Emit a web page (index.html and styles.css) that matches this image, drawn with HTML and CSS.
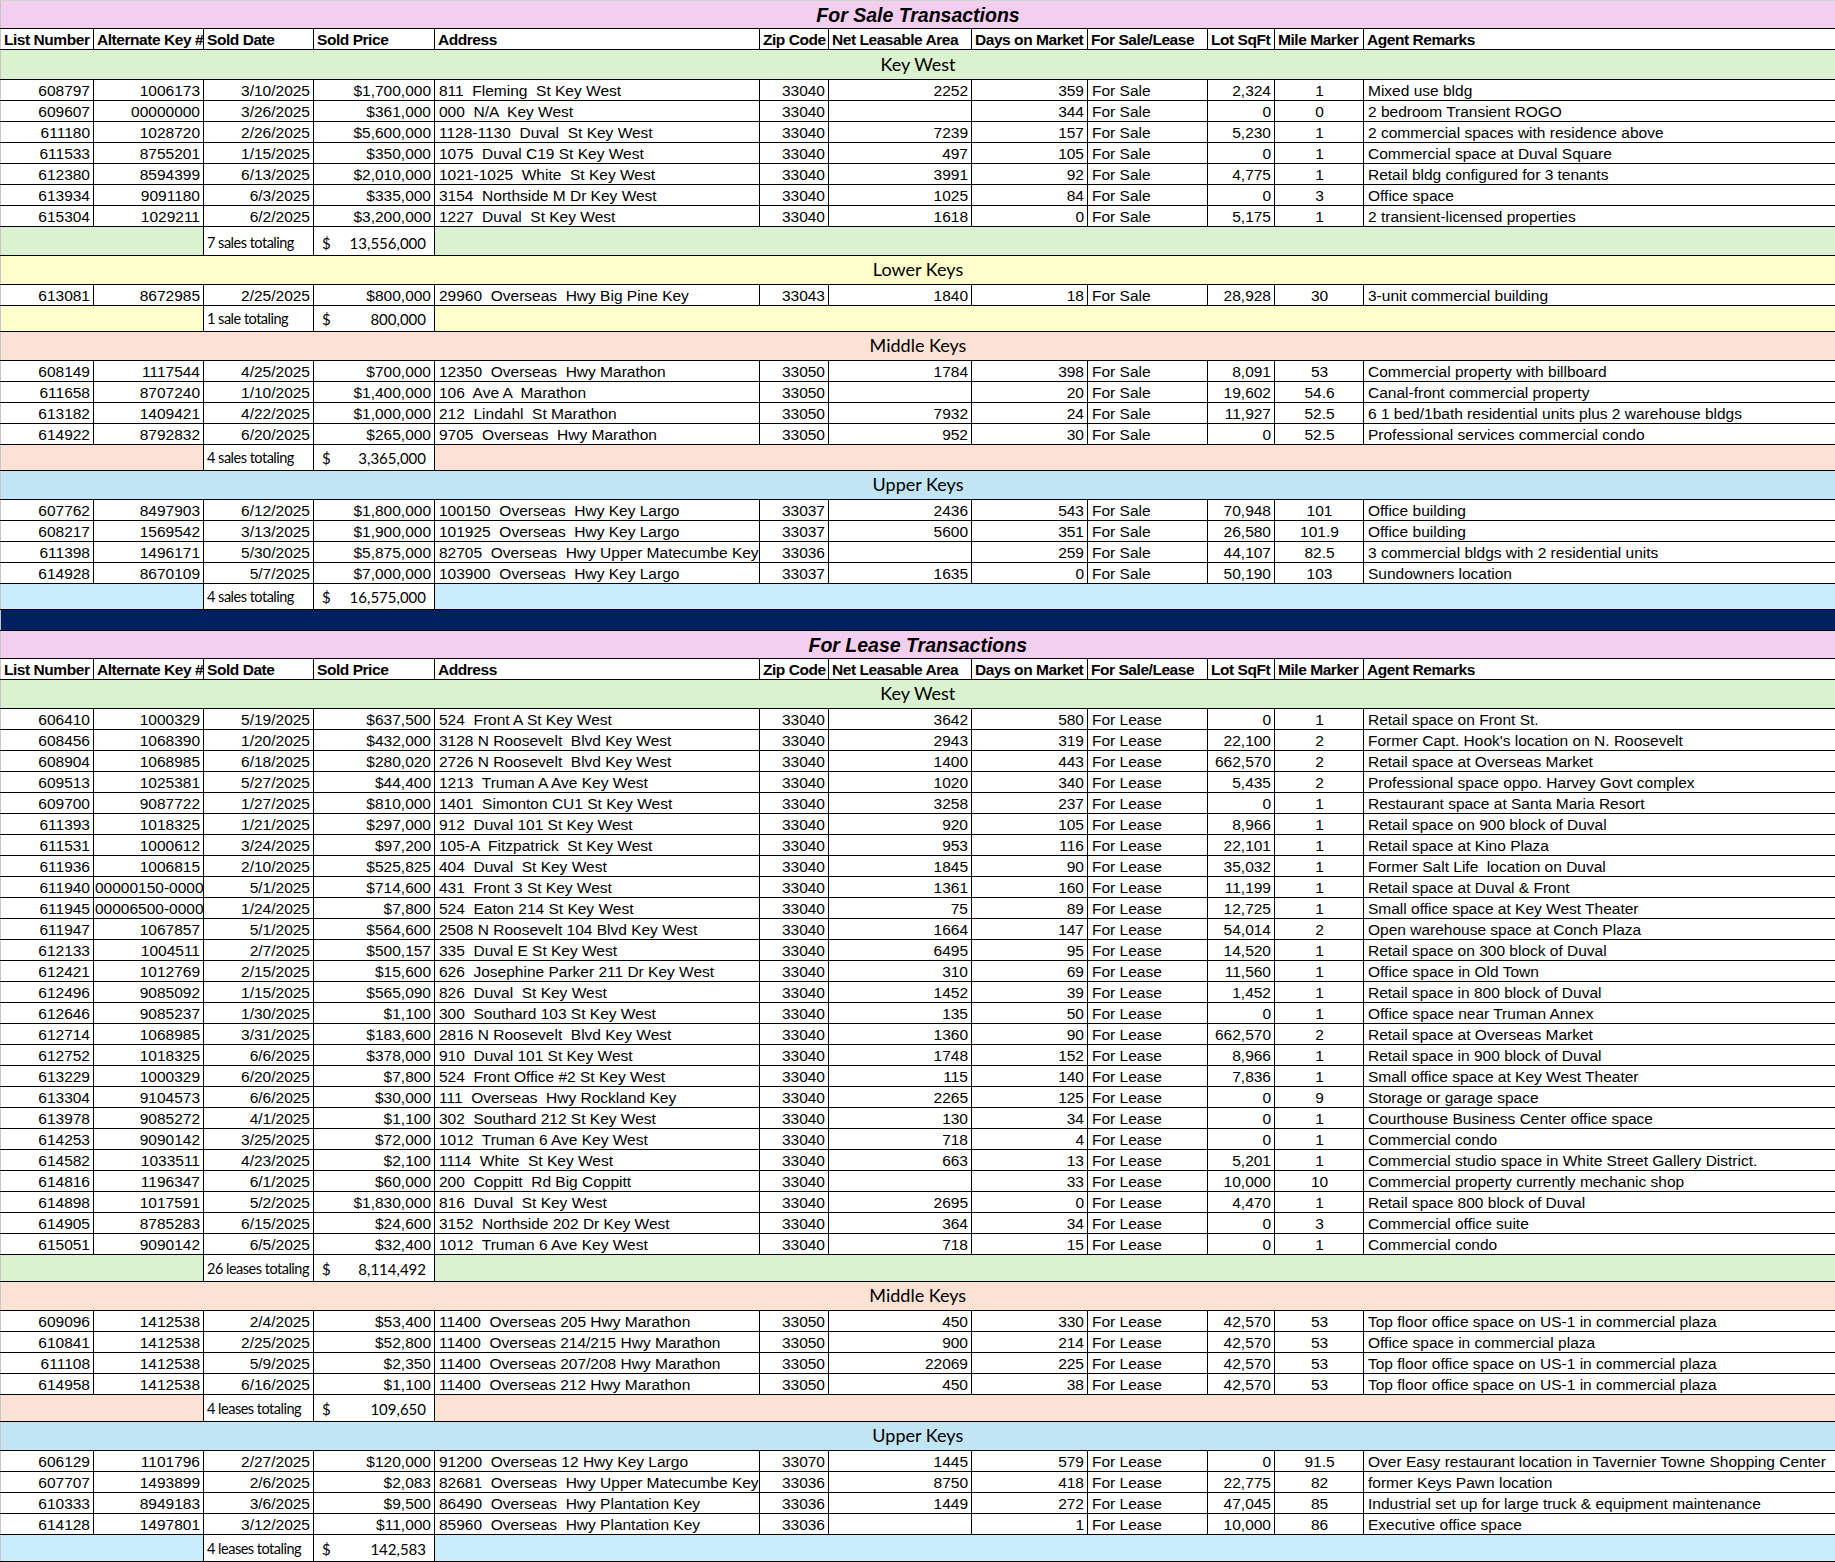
FILE: index.html
```html
<!DOCTYPE html>
<html lang="en">
<head>
<meta charset="utf-8">
<title>Transactions</title>
<link rel="stylesheet" href="styles.css">
</head>
<body>
<table class="sheet">
<colgroup>
<col class="w93"><col class="w110"><col class="w110"><col class="w121"><col class="w325"><col class="w69"><col class="w143"><col class="w116"><col class="w120"><col class="w67"><col class="w89"><col class="w472">
</colgroup>
<tbody class="sale">
<tr class="title first"><td colspan="12">For Sale Transactions</td></tr>
<tr class="head"><th>List Number</th><th>Alternate Key #</th><th>Sold Date</th><th>Sold Price</th><th>Address</th><th>Zip Code</th><th>Net Leasable Area</th><th>Days on Market</th><th>For Sale/Lease</th><th>Lot SqFt</th><th>Mile Marker</th><th>Agent Remarks</th></tr>
<tr class="band kw big"><td colspan="12">Key West</td></tr>
<tr class="row"><td class="r">608797</td><td class="r">1006173</td><td class="r">3/10/2025</td><td class="r">$1,700,000</td><td>811  Fleming  St Key West</td><td class="r">33040</td><td class="r">2252</td><td class="r">359</td><td>For Sale</td><td class="r">2,324</td><td class="c">1</td><td>Mixed use bldg</td></tr>
<tr class="row"><td class="r">609607</td><td class="r">00000000</td><td class="r">3/26/2025</td><td class="r">$361,000</td><td>000  N/A  Key West</td><td class="r">33040</td><td class="r"></td><td class="r">344</td><td>For Sale</td><td class="r">0</td><td class="c">0</td><td>2 bedroom Transient ROGO</td></tr>
<tr class="row"><td class="r">611180</td><td class="r">1028720</td><td class="r">2/26/2025</td><td class="r">$5,600,000</td><td>1128-1130  Duval  St Key West</td><td class="r">33040</td><td class="r">7239</td><td class="r">157</td><td>For Sale</td><td class="r">5,230</td><td class="c">1</td><td>2 commercial spaces with residence above</td></tr>
<tr class="row"><td class="r">611533</td><td class="r">8755201</td><td class="r">1/15/2025</td><td class="r">$350,000</td><td>1075  Duval C19 St Key West</td><td class="r">33040</td><td class="r">497</td><td class="r">105</td><td>For Sale</td><td class="r">0</td><td class="c">1</td><td>Commercial space at Duval Square</td></tr>
<tr class="row"><td class="r">612380</td><td class="r">8594399</td><td class="r">6/13/2025</td><td class="r">$2,010,000</td><td>1021-1025  White  St Key West</td><td class="r">33040</td><td class="r">3991</td><td class="r">92</td><td>For Sale</td><td class="r">4,775</td><td class="c">1</td><td>Retail bldg configured for 3 tenants</td></tr>
<tr class="row"><td class="r">613934</td><td class="r">9091180</td><td class="r">6/3/2025</td><td class="r">$335,000</td><td>3154  Northside M Dr Key West</td><td class="r">33040</td><td class="r">1025</td><td class="r">84</td><td>For Sale</td><td class="r">0</td><td class="c">3</td><td>Office space</td></tr>
<tr class="row"><td class="r">615304</td><td class="r">1029211</td><td class="r">6/2/2025</td><td class="r">$3,200,000</td><td>1227  Duval  St Key West</td><td class="r">33040</td><td class="r">1618</td><td class="r">0</td><td>For Sale</td><td class="r">5,175</td><td class="c">1</td><td>2 transient-licensed properties</td></tr>
<tr class="tot kw big"><td colspan="2" class="fill"></td><td class="lbl">7 sales totaling</td><td class="amt"><div class="money"><span>$</span><span>13,556,000</span></div></td><td colspan="8" class="fill"></td></tr>

<tr class="band lk"><td colspan="12">Lower Keys</td></tr>
<tr class="row"><td class="r">613081</td><td class="r">8672985</td><td class="r">2/25/2025</td><td class="r">$800,000</td><td>29960  Overseas  Hwy Big Pine Key</td><td class="r">33043</td><td class="r">1840</td><td class="r">18</td><td>For Sale</td><td class="r">28,928</td><td class="c">30</td><td>3-unit commercial building</td></tr>
<tr class="tot lk"><td colspan="2" class="fill"></td><td class="lbl">1 sale totaling</td><td class="amt"><div class="money"><span>$</span><span>800,000</span></div></td><td colspan="8" class="fill"></td></tr>

<tr class="band mk"><td colspan="12">Middle Keys</td></tr>
<tr class="row"><td class="r">608149</td><td class="r">1117544</td><td class="r">4/25/2025</td><td class="r">$700,000</td><td>12350  Overseas  Hwy Marathon</td><td class="r">33050</td><td class="r">1784</td><td class="r">398</td><td>For Sale</td><td class="r">8,091</td><td class="c">53</td><td>Commercial property with billboard</td></tr>
<tr class="row"><td class="r">611658</td><td class="r">8707240</td><td class="r">1/10/2025</td><td class="r">$1,400,000</td><td>106  Ave A  Marathon</td><td class="r">33050</td><td class="r"></td><td class="r">20</td><td>For Sale</td><td class="r">19,602</td><td class="c">54.6</td><td>Canal-front commercial property</td></tr>
<tr class="row"><td class="r">613182</td><td class="r">1409421</td><td class="r">4/22/2025</td><td class="r">$1,000,000</td><td>212  Lindahl  St Marathon</td><td class="r">33050</td><td class="r">7932</td><td class="r">24</td><td>For Sale</td><td class="r">11,927</td><td class="c">52.5</td><td>6 1 bed/1bath residential units plus 2 warehouse bldgs</td></tr>
<tr class="row"><td class="r">614922</td><td class="r">8792832</td><td class="r">6/20/2025</td><td class="r">$265,000</td><td>9705  Overseas  Hwy Marathon</td><td class="r">33050</td><td class="r">952</td><td class="r">30</td><td>For Sale</td><td class="r">0</td><td class="c">52.5</td><td>Professional services commercial condo</td></tr>
<tr class="tot mk"><td colspan="2" class="fill"></td><td class="lbl">4 sales totaling</td><td class="amt"><div class="money"><span>$</span><span>3,365,000</span></div></td><td colspan="8" class="fill"></td></tr>

<tr class="band uk"><td colspan="12">Upper Keys</td></tr>
<tr class="row"><td class="r">607762</td><td class="r">8497903</td><td class="r">6/12/2025</td><td class="r">$1,800,000</td><td>100150  Overseas  Hwy Key Largo</td><td class="r">33037</td><td class="r">2436</td><td class="r">543</td><td>For Sale</td><td class="r">70,948</td><td class="c">101</td><td>Office building</td></tr>
<tr class="row"><td class="r">608217</td><td class="r">1569542</td><td class="r">3/13/2025</td><td class="r">$1,900,000</td><td>101925  Overseas  Hwy Key Largo</td><td class="r">33037</td><td class="r">5600</td><td class="r">351</td><td>For Sale</td><td class="r">26,580</td><td class="c">101.9</td><td>Office building</td></tr>
<tr class="row"><td class="r">611398</td><td class="r">1496171</td><td class="r">5/30/2025</td><td class="r">$5,875,000</td><td>82705  Overseas  Hwy Upper Matecumbe Key</td><td class="r">33036</td><td class="r"></td><td class="r">259</td><td>For Sale</td><td class="r">44,107</td><td class="c">82.5</td><td>3 commercial bldgs with 2 residential units</td></tr>
<tr class="row"><td class="r">614928</td><td class="r">8670109</td><td class="r">5/7/2025</td><td class="r">$7,000,000</td><td>103900  Overseas  Hwy Key Largo</td><td class="r">33037</td><td class="r">1635</td><td class="r">0</td><td>For Sale</td><td class="r">50,190</td><td class="c">103</td><td>Sundowners location</td></tr>
<tr class="tot uk"><td colspan="2" class="fill"></td><td class="lbl">4 sales totaling</td><td class="amt"><div class="money"><span>$</span><span>16,575,000</span></div></td><td colspan="8" class="fill"></td></tr>

<tr class="navy"><td colspan="12"></td></tr>
</tbody>
<tbody class="lease">
<tr class="title"><td colspan="12">For Lease Transactions</td></tr>
<tr class="head"><th>List Number</th><th>Alternate Key #</th><th>Sold Date</th><th>Sold Price</th><th>Address</th><th>Zip Code</th><th>Net Leasable Area</th><th>Days on Market</th><th>For Sale/Lease</th><th>Lot SqFt</th><th>Mile Marker</th><th>Agent Remarks</th></tr>
<tr class="band kw"><td colspan="12">Key West</td></tr>
<tr class="row"><td class="r">606410</td><td class="r">1000329</td><td class="r">5/19/2025</td><td class="r">$637,500</td><td>524  Front A St Key West</td><td class="r">33040</td><td class="r">3642</td><td class="r">580</td><td>For Lease</td><td class="r">0</td><td class="c">1</td><td>Retail space on Front St.</td></tr>
<tr class="row"><td class="r">608456</td><td class="r">1068390</td><td class="r">1/20/2025</td><td class="r">$432,000</td><td>3128 N Roosevelt  Blvd Key West</td><td class="r">33040</td><td class="r">2943</td><td class="r">319</td><td>For Lease</td><td class="r">22,100</td><td class="c">2</td><td>Former Capt. Hook's location on N. Roosevelt</td></tr>
<tr class="row"><td class="r">608904</td><td class="r">1068985</td><td class="r">6/18/2025</td><td class="r">$280,020</td><td>2726 N Roosevelt  Blvd Key West</td><td class="r">33040</td><td class="r">1400</td><td class="r">443</td><td>For Lease</td><td class="r">662,570</td><td class="c">2</td><td>Retail space at Overseas Market</td></tr>
<tr class="row"><td class="r">609513</td><td class="r">1025381</td><td class="r">5/27/2025</td><td class="r">$44,400</td><td>1213  Truman A Ave Key West</td><td class="r">33040</td><td class="r">1020</td><td class="r">340</td><td>For Lease</td><td class="r">5,435</td><td class="c">2</td><td>Professional space oppo. Harvey Govt complex</td></tr>
<tr class="row"><td class="r">609700</td><td class="r">9087722</td><td class="r">1/27/2025</td><td class="r">$810,000</td><td>1401  Simonton CU1 St Key West</td><td class="r">33040</td><td class="r">3258</td><td class="r">237</td><td>For Lease</td><td class="r">0</td><td class="c">1</td><td>Restaurant space at Santa Maria Resort</td></tr>
<tr class="row"><td class="r">611393</td><td class="r">1018325</td><td class="r">1/21/2025</td><td class="r">$297,000</td><td>912  Duval 101 St Key West</td><td class="r">33040</td><td class="r">920</td><td class="r">105</td><td>For Lease</td><td class="r">8,966</td><td class="c">1</td><td>Retail space on 900 block of Duval</td></tr>
<tr class="row"><td class="r">611531</td><td class="r">1000612</td><td class="r">3/24/2025</td><td class="r">$97,200</td><td>105-A  Fitzpatrick  St Key West</td><td class="r">33040</td><td class="r">953</td><td class="r">116</td><td>For Lease</td><td class="r">22,101</td><td class="c">1</td><td>Retail space at Kino Plaza</td></tr>
<tr class="row"><td class="r">611936</td><td class="r">1006815</td><td class="r">2/10/2025</td><td class="r">$525,825</td><td>404  Duval  St Key West</td><td class="r">33040</td><td class="r">1845</td><td class="r">90</td><td>For Lease</td><td class="r">35,032</td><td class="c">1</td><td>Former Salt Life  location on Duval</td></tr>
<tr class="row"><td class="r">611940</td><td class="clip">00000150-000000</td><td class="r">5/1/2025</td><td class="r">$714,600</td><td>431  Front 3 St Key West</td><td class="r">33040</td><td class="r">1361</td><td class="r">160</td><td>For Lease</td><td class="r">11,199</td><td class="c">1</td><td>Retail space at Duval &amp; Front</td></tr>
<tr class="row"><td class="r">611945</td><td class="clip">00006500-000000</td><td class="r">1/24/2025</td><td class="r">$7,800</td><td>524  Eaton 214 St Key West</td><td class="r">33040</td><td class="r">75</td><td class="r">89</td><td>For Lease</td><td class="r">12,725</td><td class="c">1</td><td>Small office space at Key West Theater</td></tr>
<tr class="row"><td class="r">611947</td><td class="r">1067857</td><td class="r">5/1/2025</td><td class="r">$564,600</td><td>2508 N Roosevelt 104 Blvd Key West</td><td class="r">33040</td><td class="r">1664</td><td class="r">147</td><td>For Lease</td><td class="r">54,014</td><td class="c">2</td><td>Open warehouse space at Conch Plaza</td></tr>
<tr class="row"><td class="r">612133</td><td class="r">1004511</td><td class="r">2/7/2025</td><td class="r">$500,157</td><td>335  Duval E St Key West</td><td class="r">33040</td><td class="r">6495</td><td class="r">95</td><td>For Lease</td><td class="r">14,520</td><td class="c">1</td><td>Retail space on 300 block of Duval</td></tr>
<tr class="row"><td class="r">612421</td><td class="r">1012769</td><td class="r">2/15/2025</td><td class="r">$15,600</td><td>626  Josephine Parker 211 Dr Key West</td><td class="r">33040</td><td class="r">310</td><td class="r">69</td><td>For Lease</td><td class="r">11,560</td><td class="c">1</td><td>Office space in Old Town</td></tr>
<tr class="row"><td class="r">612496</td><td class="r">9085092</td><td class="r">1/15/2025</td><td class="r">$565,090</td><td>826  Duval  St Key West</td><td class="r">33040</td><td class="r">1452</td><td class="r">39</td><td>For Lease</td><td class="r">1,452</td><td class="c">1</td><td>Retail space in 800 block of Duval</td></tr>
<tr class="row"><td class="r">612646</td><td class="r">9085237</td><td class="r">1/30/2025</td><td class="r">$1,100</td><td>300  Southard 103 St Key West</td><td class="r">33040</td><td class="r">135</td><td class="r">50</td><td>For Lease</td><td class="r">0</td><td class="c">1</td><td>Office space near Truman Annex</td></tr>
<tr class="row"><td class="r">612714</td><td class="r">1068985</td><td class="r">3/31/2025</td><td class="r">$183,600</td><td>2816 N Roosevelt  Blvd Key West</td><td class="r">33040</td><td class="r">1360</td><td class="r">90</td><td>For Lease</td><td class="r">662,570</td><td class="c">2</td><td>Retail space at Overseas Market</td></tr>
<tr class="row"><td class="r">612752</td><td class="r">1018325</td><td class="r">6/6/2025</td><td class="r">$378,000</td><td>910  Duval 101 St Key West</td><td class="r">33040</td><td class="r">1748</td><td class="r">152</td><td>For Lease</td><td class="r">8,966</td><td class="c">1</td><td>Retail space in 900 block of Duval</td></tr>
<tr class="row"><td class="r">613229</td><td class="r">1000329</td><td class="r">6/20/2025</td><td class="r">$7,800</td><td>524  Front Office #2 St Key West</td><td class="r">33040</td><td class="r">115</td><td class="r">140</td><td>For Lease</td><td class="r">7,836</td><td class="c">1</td><td>Small office space at Key West Theater</td></tr>
<tr class="row"><td class="r">613304</td><td class="r">9104573</td><td class="r">6/6/2025</td><td class="r">$30,000</td><td>111  Overseas  Hwy Rockland Key</td><td class="r">33040</td><td class="r">2265</td><td class="r">125</td><td>For Lease</td><td class="r">0</td><td class="c">9</td><td>Storage or garage space</td></tr>
<tr class="row"><td class="r">613978</td><td class="r">9085272</td><td class="r">4/1/2025</td><td class="r">$1,100</td><td>302  Southard 212 St Key West</td><td class="r">33040</td><td class="r">130</td><td class="r">34</td><td>For Lease</td><td class="r">0</td><td class="c">1</td><td>Courthouse Business Center office space</td></tr>
<tr class="row"><td class="r">614253</td><td class="r">9090142</td><td class="r">3/25/2025</td><td class="r">$72,000</td><td>1012  Truman 6 Ave Key West</td><td class="r">33040</td><td class="r">718</td><td class="r">4</td><td>For Lease</td><td class="r">0</td><td class="c">1</td><td>Commercial condo</td></tr>
<tr class="row"><td class="r">614582</td><td class="r">1033511</td><td class="r">4/23/2025</td><td class="r">$2,100</td><td>1114  White  St Key West</td><td class="r">33040</td><td class="r">663</td><td class="r">13</td><td>For Lease</td><td class="r">5,201</td><td class="c">1</td><td>Commercial studio space in White Street Gallery District.</td></tr>
<tr class="row"><td class="r">614816</td><td class="r">1196347</td><td class="r">6/1/2025</td><td class="r">$60,000</td><td>200  Coppitt  Rd Big Coppitt</td><td class="r">33040</td><td class="r"></td><td class="r">33</td><td>For Lease</td><td class="r">10,000</td><td class="c">10</td><td>Commercial property currently mechanic shop</td></tr>
<tr class="row"><td class="r">614898</td><td class="r">1017591</td><td class="r">5/2/2025</td><td class="r">$1,830,000</td><td>816  Duval  St Key West</td><td class="r">33040</td><td class="r">2695</td><td class="r">0</td><td>For Lease</td><td class="r">4,470</td><td class="c">1</td><td>Retail space 800 block of Duval</td></tr>
<tr class="row"><td class="r">614905</td><td class="r">8785283</td><td class="r">6/15/2025</td><td class="r">$24,600</td><td>3152  Northside 202 Dr Key West</td><td class="r">33040</td><td class="r">364</td><td class="r">34</td><td>For Lease</td><td class="r">0</td><td class="c">3</td><td>Commercial office suite</td></tr>
<tr class="row"><td class="r">615051</td><td class="r">9090142</td><td class="r">6/5/2025</td><td class="r">$32,400</td><td>1012  Truman 6 Ave Key West</td><td class="r">33040</td><td class="r">718</td><td class="r">15</td><td>For Lease</td><td class="r">0</td><td class="c">1</td><td>Commercial condo</td></tr>
<tr class="tot kw"><td colspan="2" class="fill"></td><td class="lbl">26 leases totaling</td><td class="amt"><div class="money"><span>$</span><span>8,114,492</span></div></td><td colspan="8" class="fill"></td></tr>

<tr class="band mk"><td colspan="12">Middle Keys</td></tr>
<tr class="row"><td class="r">609096</td><td class="r">1412538</td><td class="r">2/4/2025</td><td class="r">$53,400</td><td>11400  Overseas 205 Hwy Marathon</td><td class="r">33050</td><td class="r">450</td><td class="r">330</td><td>For Lease</td><td class="r">42,570</td><td class="c">53</td><td>Top floor office space on US-1 in commercial plaza</td></tr>
<tr class="row"><td class="r">610841</td><td class="r">1412538</td><td class="r">2/25/2025</td><td class="r">$52,800</td><td>11400  Overseas 214/215 Hwy Marathon</td><td class="r">33050</td><td class="r">900</td><td class="r">214</td><td>For Lease</td><td class="r">42,570</td><td class="c">53</td><td>Office space in commercial plaza</td></tr>
<tr class="row"><td class="r">611108</td><td class="r">1412538</td><td class="r">5/9/2025</td><td class="r">$2,350</td><td>11400  Overseas 207/208 Hwy Marathon</td><td class="r">33050</td><td class="r">22069</td><td class="r">225</td><td>For Lease</td><td class="r">42,570</td><td class="c">53</td><td>Top floor office space on US-1 in commercial plaza</td></tr>
<tr class="row"><td class="r">614958</td><td class="r">1412538</td><td class="r">6/16/2025</td><td class="r">$1,100</td><td>11400  Overseas 212 Hwy Marathon</td><td class="r">33050</td><td class="r">450</td><td class="r">38</td><td>For Lease</td><td class="r">42,570</td><td class="c">53</td><td>Top floor office space on US-1 in commercial plaza</td></tr>
<tr class="tot mk"><td colspan="2" class="fill"></td><td class="lbl">4 leases totaling</td><td class="amt"><div class="money"><span>$</span><span>109,650</span></div></td><td colspan="8" class="fill"></td></tr>

<tr class="band uk"><td colspan="12">Upper Keys</td></tr>
<tr class="row"><td class="r">606129</td><td class="r">1101796</td><td class="r">2/27/2025</td><td class="r">$120,000</td><td>91200  Overseas 12 Hwy Key Largo</td><td class="r">33070</td><td class="r">1445</td><td class="r">579</td><td>For Lease</td><td class="r">0</td><td class="c">91.5</td><td>Over Easy restaurant location in Tavernier Towne Shopping Center</td></tr>
<tr class="row"><td class="r">607707</td><td class="r">1493899</td><td class="r">2/6/2025</td><td class="r">$2,083</td><td>82681  Overseas  Hwy Upper Matecumbe Key</td><td class="r">33036</td><td class="r">8750</td><td class="r">418</td><td>For Lease</td><td class="r">22,775</td><td class="c">82</td><td>former Keys Pawn location</td></tr>
<tr class="row"><td class="r">610333</td><td class="r">8949183</td><td class="r">3/6/2025</td><td class="r">$9,500</td><td>86490  Overseas  Hwy Plantation Key</td><td class="r">33036</td><td class="r">1449</td><td class="r">272</td><td>For Lease</td><td class="r">47,045</td><td class="c">85</td><td>Industrial set up for large truck &amp; equipment maintenance</td></tr>
<tr class="row"><td class="r">614128</td><td class="r">1497801</td><td class="r">3/12/2025</td><td class="r">$11,000</td><td>85960  Overseas  Hwy Plantation Key</td><td class="r">33036</td><td class="r"></td><td class="r">1</td><td>For Lease</td><td class="r">10,000</td><td class="c">86</td><td>Executive office space</td></tr>
<tr class="tot uk last"><td colspan="2" class="fill"></td><td class="lbl">4 leases totaling</td><td class="amt"><div class="money"><span>$</span><span>142,583</span></div></td><td colspan="8" class="fill"></td></tr>
</tbody>
</table>
</body>
</html>
```

FILE: styles.css
```css
* { box-sizing: border-box; }
html, body { margin: 0; padding: 0; background: #ffffff; }
body {
  font-family: "Liberation Sans", Arial, sans-serif;
  color: #000;
}
.sheet {
  border-collapse: collapse;
  table-layout: fixed;
  width: 1835px;
}
.w93 { width: 93px; }
.w110 { width: 110px; }
.w121 { width: 121px; }
.w325 { width: 325px; }
.w69 { width: 69px; }
.w143 { width: 143px; }
.w116 { width: 116px; }
.w120 { width: 120px; }
.w67 { width: 67px; }
.w89 { width: 89px; }
.w472 { width: 472px; }

.sheet td, .sheet th {
  border: 1px solid #000;
  padding: 0 3px 0 4px;
  white-space: pre;
  overflow: hidden;
  vertical-align: bottom;
  font-size: 15.5px;
  line-height: 19px;
  font-weight: normal;
  text-align: left;
}
.sheet tr > :first-child { border-left-color: #c6c6c6; }

.r { text-align: right !important; }
.c { text-align: center !important; }
.clip { text-overflow: clip; padding-left: 1px !important; padding-right: 0 !important; }

.row td { height: 21px; background: #fff; }

.title td {
  height: 28px;
  background: #f2ceef;
  text-align: center;
  vertical-align: middle;
  font-weight: bold;
  font-style: italic;
  font-size: 19.5px;
  line-height: 24px;
  padding: 0;
}
.title.first td { border-top-color: #d4d4d4; }

.head th {
  height: 21px;
  background: #fff;
  font-weight: bold;
  font-size: 15.5px;
  letter-spacing: -0.45px;
  padding-left: 3px;
  padding-right: 0;
}

.band td {
  height: 29px;
  text-align: center;
  vertical-align: middle;
  font-family: "Lato", "Open Sans", sans-serif;
  font-size: 18px;
  line-height: 22px;
  padding: 0 0 2px 0;
}
.band.big td { height: 30px; }

.kw td { background: #daf2d0; }
.lk td { background: #ffffcc; }
.mk td { background: #fbe2d5; }
.uk td { background: #c1e5f5; }
.tot.uk td { background: #caedfb; }

.tot td { height: 26px; }
.tot.big td { height: 29px; }
.lease .tot td { height: 27px; }
.tot td.fill { padding: 0; }
.tot td.lbl, .tot td.amt {
  background: #fff;
  font-family: "Lato", "Open Sans", sans-serif;
  font-size: 14.5px;
  line-height: 18px;
  padding: 0 0 3px 3px;
  letter-spacing: -0.5px;
}
.tot td.amt { padding: 0 8px 3px 8px; letter-spacing: 0; font-size: 15px; }
.money { display: flex; justify-content: space-between; }

.navy td { height: 21px; background: #002060; padding: 0; }

.lease tr > :last-child { border-right: 2px solid #000; }
.tot.last td { border-bottom: 2px solid #000; }
```
